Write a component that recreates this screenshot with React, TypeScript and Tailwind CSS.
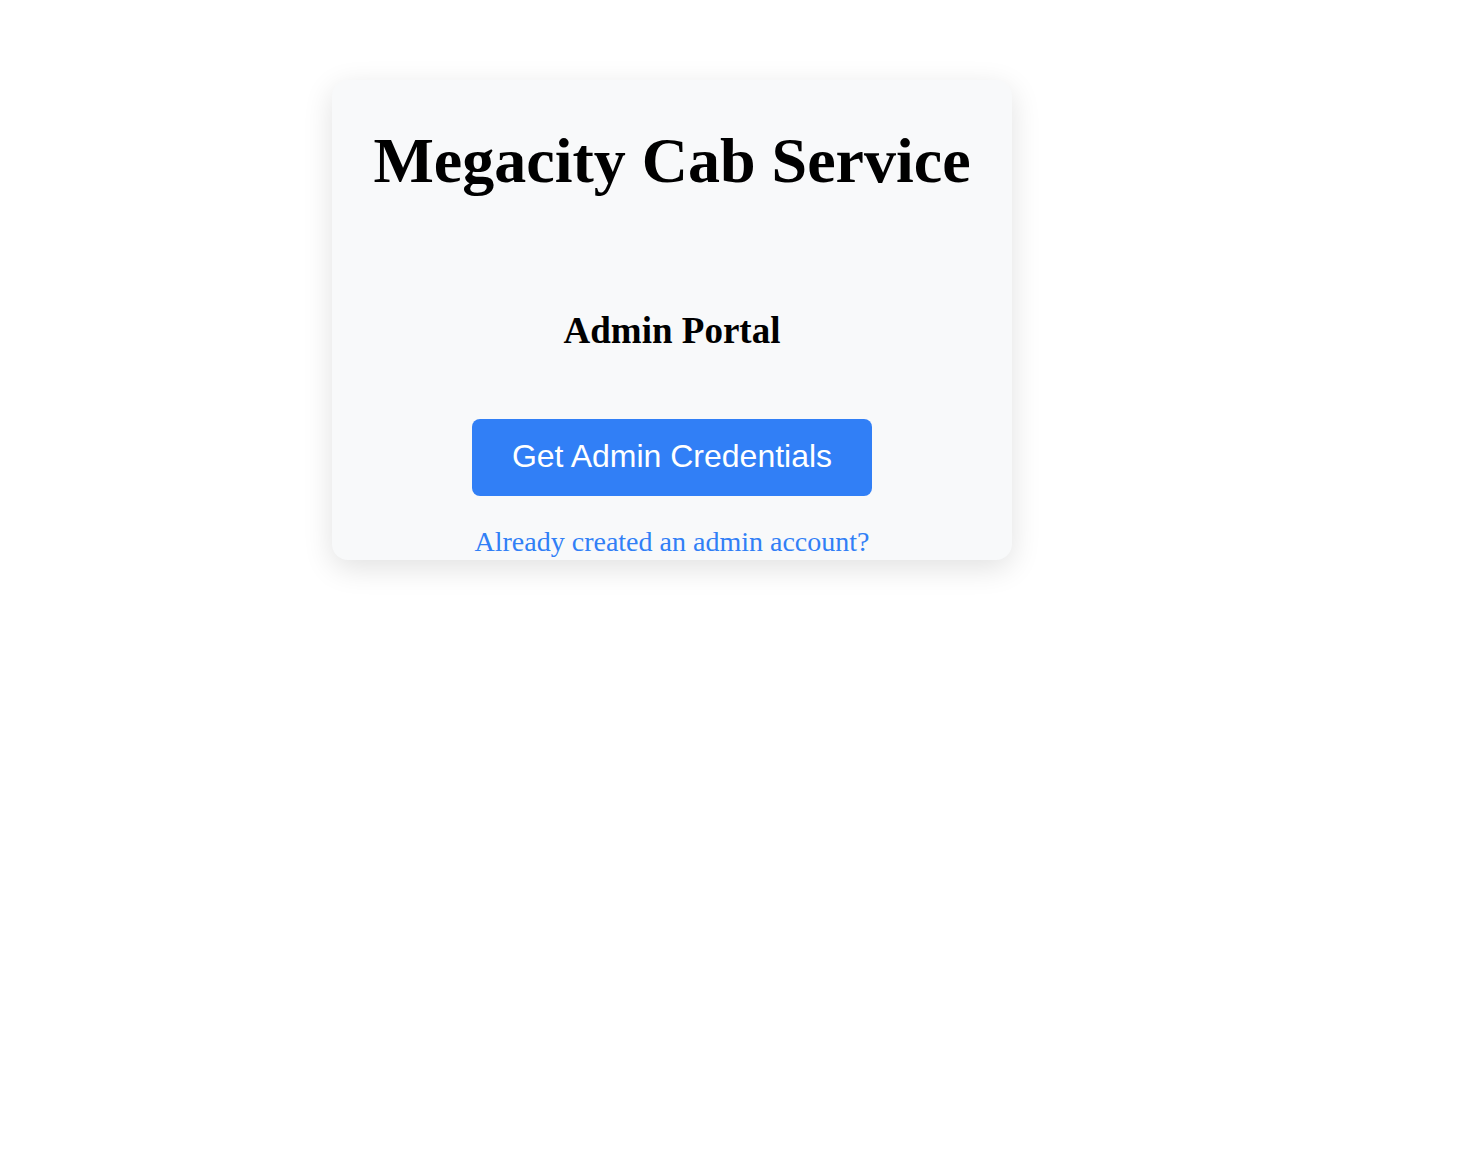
export default function App() {
  return (
    <div className="min-h-screen bg-white pt-[80px] pl-[332px]">
      <div className="flex h-[480px] w-[680px] flex-col items-center rounded-[16px] bg-[#f8f9fa] pt-[44px] shadow-[0_8px_30px_rgba(0,0,0,0.12)]">
        <h1 className="font-['Liberation_Serif',serif] text-[64px] font-bold leading-[74px] text-black">
          Megacity Cab Service
        </h1>
        <h2 className="mt-[111px] font-['Liberation_Serif',serif] text-[37px] font-bold leading-[43px] text-black">
          Admin Portal
        </h2>
        <button className="mt-[67px] w-[400px] rounded-[8px] bg-[#317ff6] pt-[19px] pb-[21px] font-['Liberation_Sans',Arial,sans-serif] text-[32px] leading-[37px] text-white">
          Get Admin Credentials
        </button>
        <a href="#" className="mt-[30px] font-['Liberation_Serif',serif] text-[28px] leading-[32px] text-[#317ff6]">
          Already created an admin account?
        </a>
      </div>
    </div>
  );
}
